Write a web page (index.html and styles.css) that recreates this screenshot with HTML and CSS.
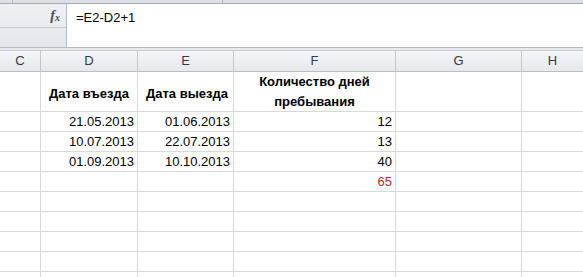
FILE: index.html
```html
<html lang="en">
<head>
	<meta charset="UTF-8">
	<title>Книга1</title>
	<link rel="stylesheet" href="styles.css">
</head>
<body>
	<div class="ribbon-edge">
		<div class="edge-part edge-a"></div>
		<div class="edge-part edge-b"></div>
		<div class="edge-part edge-c"></div>
	</div>

	<div class="formula-bar">
		<div class="name-side">
			<div class="fx-row"><span class="fx">f<sub>x</sub></span></div>
			<div class="fx-rest"></div>
		</div>
		<div class="formula">=E2-D2+1</div>
	</div>
	<div class="gap"></div>

	<div class="sheet">
		<div class="hd">C</div>
		<div class="hd">D</div>
		<div class="hd">E</div>
		<div class="hd">F</div>
		<div class="hd">G</div>
		<div class="hd last">H</div>

		<div class="c tall"></div>
		<div class="c tall bold">Дата въезда</div>
		<div class="c tall bold">Дата выезда</div>
		<div class="c tall bold center">Количество дней<br>пребывания</div>
		<div class="c tall"></div>
		<div class="c tall last"></div>

		<div class="c"></div>
		<div class="c num">21.05.2013</div>
		<div class="c num">01.06.2013</div>
		<div class="c num">12</div>
		<div class="c"></div>
		<div class="c last"></div>

		<div class="c"></div>
		<div class="c num">10.07.2013</div>
		<div class="c num">22.07.2013</div>
		<div class="c num">13</div>
		<div class="c"></div>
		<div class="c last"></div>

		<div class="c"></div>
		<div class="c num">01.09.2013</div>
		<div class="c num">10.10.2013</div>
		<div class="c num">40</div>
		<div class="c"></div>
		<div class="c last"></div>

		<div class="c"></div>
		<div class="c"></div>
		<div class="c"></div>
		<div class="c num red">65</div>
		<div class="c"></div>
		<div class="c last"></div>

		<div class="c"></div><div class="c"></div><div class="c"></div><div class="c"></div><div class="c"></div><div class="c last"></div>
		<div class="c"></div><div class="c"></div><div class="c"></div><div class="c"></div><div class="c"></div><div class="c last"></div>
		<div class="c"></div><div class="c"></div><div class="c"></div><div class="c"></div><div class="c"></div><div class="c last"></div>
		<div class="c"></div><div class="c"></div><div class="c"></div><div class="c"></div><div class="c"></div><div class="c last"></div>
		<div class="c open"></div><div class="c open"></div><div class="c open"></div><div class="c open"></div><div class="c open"></div><div class="c open last"></div>
	</div>
</body>
</html>
```

FILE: styles.css
```css
body{
	margin: 0;
	width: 583px;
	height: 277px;
	overflow: hidden;
	background: #fff;
	font-family: "Liberation Sans", Arial, sans-serif;
	font-size: 13px;
	color: #000;
}

.ribbon-edge{
	display: flex;
	height: 3px;
	border-bottom: 1px solid #a7adb5;
	background: #dde1e6;
}
.edge-part{
	height: 3px;
	border-right: 1px solid #b6bcc4;
}
.edge-a{ width: 12px; }
.edge-b{ width: 209px; }
.edge-c{ flex: 1; border-right: none; }

.formula-bar{
	display: flex;
	height: 43px;
	border-bottom: 1px solid #b5bac1;
}
.name-side{
	width: 66px;
	border-right: 1px solid #b5bac1;
	background: linear-gradient(#eef1f4, #e3e7ec);
	display: flex;
	flex-direction: column;
}
.fx-row{
	height: 23px;
	border-bottom: 1px solid #c6cbd1;
	display: flex;
	justify-content: flex-end;
	align-items: center;
	padding-right: 6px;
}
.fx{
	font-family: "Liberation Serif", "Times New Roman", serif;
	font-style: italic;
	font-weight: bold;
	font-size: 14px;
	color: #4a4f57;
	line-height: 1;
}
.fx sub{
	font-size: 10px;
	vertical-align: -1px;
}
.fx-rest{ flex: 1; }
.formula{
	flex: 1;
	background: #fff;
	padding: 6px 0 0 9px;
	font-size: 13px;
}
.gap{
	height: 2px;
	background: #e6e9ed;
}

.sheet{
	border-top: 1px solid #c9cdd2;
	display: grid;
	grid-template-columns: 41px 97px 96px 162px 126px 1fr;
	grid-template-rows: 21px 40px repeat(8, 20px) 5px;
}
.hd{
	box-sizing: border-box;
	background: linear-gradient(#f4f6f8, #e5e8ec);
	border-right: 1px solid #c3c7cc;
	border-bottom: 1px solid #b9bec4;
	color: #333a44;
	font-size: 13px;
	text-align: center;
	line-height: 20px;
}
.c{
	box-sizing: border-box;
	border-right: 1px solid #d9d9d9;
	border-bottom: 1px solid #d9d9d9;
	line-height: 19px;
	padding: 0 3px;
	white-space: nowrap;
	overflow: hidden;
}
.open{ border-bottom: none; }
.last{ border-right: none; }
.tall{
	display: flex;
	align-items: center;
	padding-top: 4px;
}
.bold{
	font-weight: bold;
	padding-left: 8px;
}
.center{
	justify-content: center;
	text-align: center;
	line-height: 20px;
	padding: 0;
}
.num{ text-align: right; }
.red{ color: #c0282d; }
```
